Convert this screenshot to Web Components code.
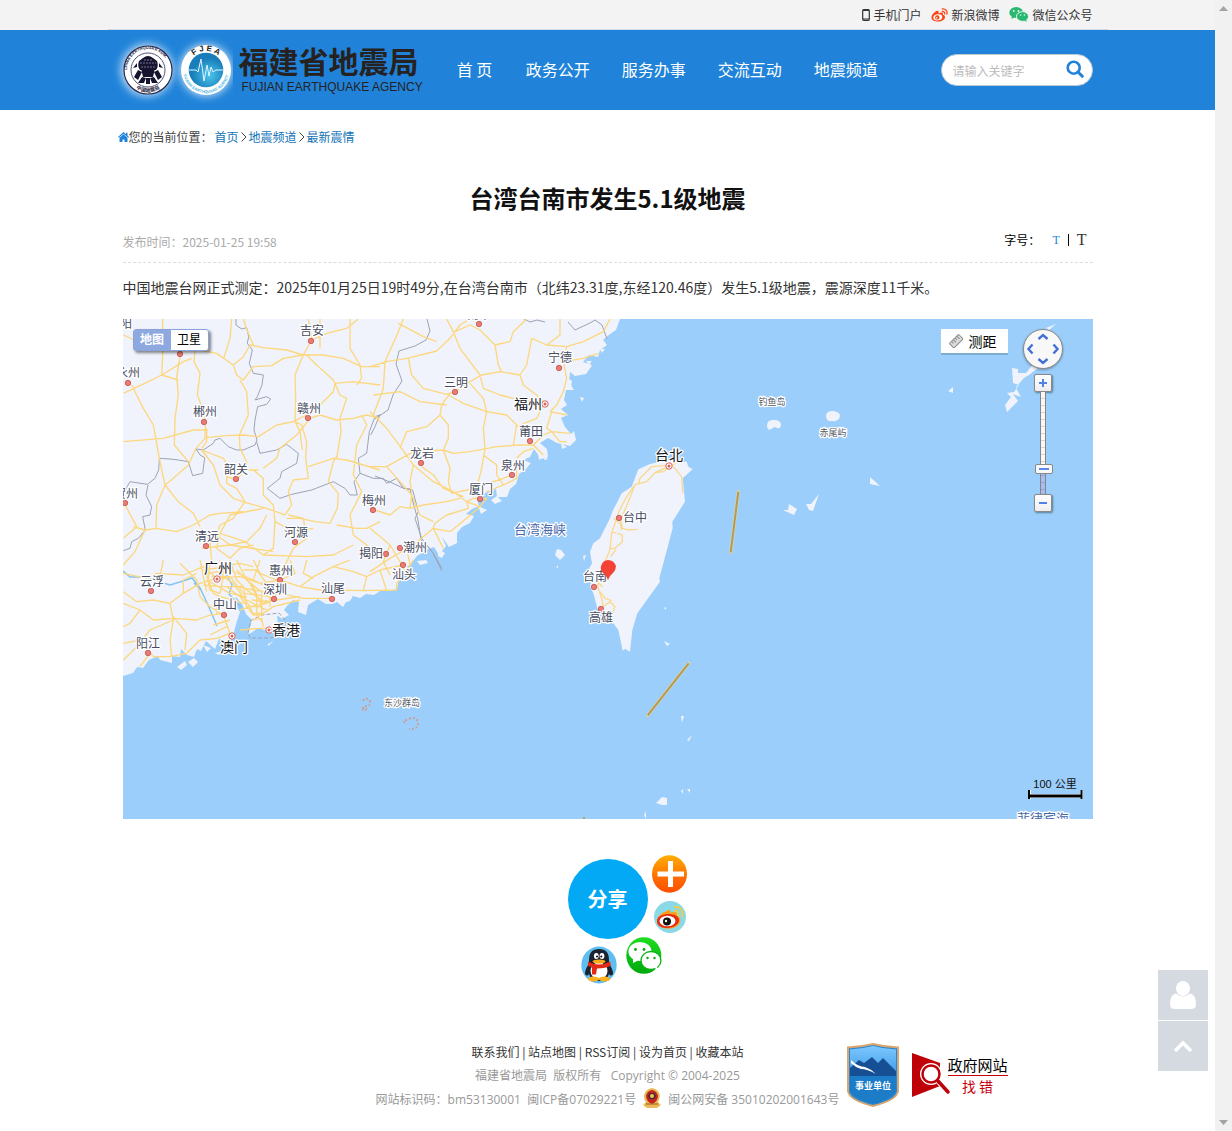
<!DOCTYPE html>
<html lang="zh-CN">
<head>
<meta charset="utf-8">
<meta name="viewport" content="width=device-width, initial-scale=1">
<title>台湾台南市发生5.1级地震</title>
<style>
html,body{margin:0;background:#fff}
body{min-height:100vh;display:grid;grid-template-columns:minmax(0,1fr) 17px;font:12px/24px "Noto Sans CJK SC",sans-serif;color:#333}
</style>
</head>
<body>
<quake-page></quake-page>
<page-scrollbar></page-scrollbar>
<script>
const define=(name,markup,setup)=>customElements.define(name,class extends HTMLElement{
  constructor(){super();const t=document.createElement('template');
    t.innerHTML='<style>*{box-sizing:border-box}a{color:inherit;text-decoration:none}button{font:inherit;border:0;padding:0;margin:0;background:none;cursor:pointer}svg{display:block}:host{display:block}</style>'+markup;
    this.attachShadow({mode:'open'}).appendChild(t.content.cloneNode(true));
    if(setup)setup(this.shadowRoot);}
});

define('page-scrollbar',`<style>
:host{background:#f1f1f1;display:flex;flex-direction:column;justify-content:space-between;align-items:center;padding:6px 0}
</style>
<svg width="9" height="5"><path d="M0 5 4.500 0 9 5z" fill="#a3a3a3"/></svg>
<svg width="9" height="5"><path d="M0 0h9L4.500 5z" fill="#a3a3a3"/></svg>`);

define('top-bar',`<style>
:host{background:#f3f3f3}
nav{max-width:1000px;height:30px;margin:0 auto;padding:0 15px;border-bottom:1px solid #c9dcee;display:flex;justify-content:flex-end;align-items:center;gap:10px}
a{display:flex;align-items:center;gap:3px}
</style>
<nav>
<a href="#"><svg width="8" height="12" viewBox="0 0 8 12"><rect x=".7" y=".7" width="6.600" height="10.600" rx="1" fill="none" stroke="#333" stroke-width="1.200"/><path d="M1 1.500h6M1 10h6" stroke="#333"/></svg>手机门户</a>
<a href="#"><svg width="17" height="14" viewBox="0 0 17 14"><path d="M7.500 4C8 3 7 2.200 5.500 3 3 4.200.5 7 .5 9.400.5 12 3.500 13.500 7 13.500c4 0 7-2 7-4.300 0-1.500-1-2-2.200-2.400.6-1.500 0-2.200-1.200-2.200-1 0-2 .4-2.900.8z" fill="#fa4412"/><ellipse cx="6.800" cy="9.300" rx="4.500" ry="3" transform="rotate(-8 6.800 9.300)" fill="#fff"/><circle cx="6.300" cy="9.400" r="2.200" fill="#fa4412"/><circle cx="5.700" cy="9.800" r=".8" fill="#fff"/><path d="M11.200 3.400c1.600-.3 2.800.9 2.400 2.500M11.300.9c3.200-.4 5.400 2.100 4.600 5.200" fill="none" stroke="#fa4412" stroke-width="1.300" stroke-linecap="round"/></svg>新浪微博</a>
<a href="#"><svg width="20" height="15" viewBox="0 0 20 15"><ellipse cx="7.200" cy="5.500" rx="6.900" ry="5.400" fill="#27b96f"/><path d="M3 9 2.300 12 6 10z" fill="#27b96f"/><ellipse cx="13.500" cy="9.500" rx="6" ry="4.900" fill="#27b96f" stroke="#f3f3f3"/><path d="M15 13l2.600 2-.6-3z" fill="#27b96f"/><g fill="#f3f3f3"><circle cx="4.800" cy="4" r=".9"/><circle cx="9.400" cy="4" r=".9"/><circle cx="11.600" cy="8" r=".8"/><circle cx="15.400" cy="8" r=".8"/></g></svg>微信公众号</a>
</nav>`);

define('agency-logo',`<style>
a{display:flex;align-items:center;color:#262222}
svg{margin:0 6px 0 -5px}
.n{display:flex;flex-direction:column}
b{font:700 30px/34px "Liberation Sans","Noto Sans CJK SC",sans-serif}
i{font:normal 12px/14px "Liberation Sans",sans-serif;padding-left:3px}
</style>
<a href="#" aria-label="福建省地震局">
<svg width="120" height="68" viewBox="0 0 120 68">
<defs><filter id="g" x="-40%" y="-40%" width="180%" height="180%"><feGaussianBlur stdDeviation="4"/></filter>
<radialGradient id="b" cx=".6" cy=".65"><stop offset="0" stop-color="#4cc4ea"/><stop offset="1" stop-color="#187dba"/></radialGradient>
<path id="r1" d="M14 34a21 21 0 0 1 42 0"/><path id="r2" d="M13 34a22 22 0 0 0 44 0"/><path id="r3" d="M74 34a19 19 0 0 1 38 0"/><path id="r4" d="M70 34a23 23 0 0 0 46 0"/></defs>
<circle cx="34" cy="34" r="26" fill="#fff" opacity=".75" filter="url(#g)"/><circle cx="93" cy="34" r="26" fill="#fff" opacity=".75" filter="url(#g)"/>
<circle cx="35" cy="34" r="24" fill="#fff" stroke="#2b2a50" stroke-width="1.200"/><circle cx="35" cy="34" r="17" fill="none" stroke="#2b2a50" stroke-width=".8"/>
<g fill="#1d1b3d" font-family="Liberation Sans" font-size="4" font-weight="bold"><text><textPath href="#r1" startOffset="0" >CHINA EARTHQUAKE ADM.</textPath></text><text font-family="Noto Sans CJK SC" font-size="5"><textPath href="#r2" startOffset="50%" text-anchor="middle">中国地震局</textPath></text></g>
<g fill="#15132f"><path d="M30 22q5-4 10 0l4 3q2 5-1 9H27q-3-4-1-9z"/><path d="M28 32h14l-2 9H30zM25 34l-4 7 4 3 4-8zM45 34l4 7-4 3-4-8zM29 41l-4 6h6l2-5zM41 41l4 6h-6l-2-5zM33 42h4v6h-4z"/><path d="M24 27l-4 5 4-1zM46 27l4 5-4-1z"/></g>
<path d="M27 27h16M28 31h14M31 24h8" stroke="#bcbbd0" stroke-width=".6" stroke-dasharray="2 1"/>
<circle cx="93" cy="34" r="25" fill="#fff"/><circle cx="93" cy="34" r="17.300" fill="url(#b)"/>
<path d="M76 34h7l2 2 3-13 3 22 3-16 2 11 2-9 2 5 3-2h7" fill="none" stroke="#dff5ff" stroke-width="1"/>
<g font-family="Liberation Sans" font-weight="bold"><text font-size="8" fill="#222"><textPath href="#r3" startOffset="50%" text-anchor="middle">F J E A</textPath></text><text font-size="4" fill="#46b3de"><textPath href="#r4" startOffset="50%" text-anchor="middle">FUJIAN EARTHQUAKE AGENCY</textPath></text></g>
</svg>
<span class="n"><b>福建省地震局</b><i>FUJIAN EARTHQUAKE AGENCY</i></span></a>`);

define('site-header',`<style>
:host{background:#2083d9}
.w{max-width:980px;height:80px;margin:0 auto;padding:0 5px 0 0;display:flex;align-items:center}
nav{display:flex;gap:32px;margin-left:34px;padding-bottom:2px;font-size:16px;line-height:24px;color:#fff;white-space:nowrap}
nav a{min-width:37px}
form{margin-left:auto;width:152px;height:32px;border-radius:16px;background:#fff;border:1px solid #bcc8d2;display:flex;align-items:center;padding:0 8px 0 11px}
form svg{margin-bottom:2px}
input{flex:1;min-width:0;border:0;outline:0;background:none;font:12px "Noto Sans CJK SC",sans-serif;padding:0}
input::placeholder{color:#bbb;opacity:1}
</style>
<div class="w"><agency-logo></agency-logo>
<nav><a href="#">首 页</a><a href="#">政务公开</a><a href="#">服务办事</a><a href="#">交流互动</a><a href="#">地震频道</a></nav>
<form><input type="text" aria-label="请输入关键字" placeholder="请输入关键字"><button type="button" aria-label="搜索"><svg width="18" height="18" viewBox="0 0 18 18" fill="none" stroke="#2083d9"><circle cx="7.700" cy="7.700" r="6" stroke-width="2.600"/><path d="M12 12l4.300 4.300" stroke-width="3" stroke-linecap="round"/></svg></button></form></div>`);

define('crumb-trail',`<style>
nav{max-width:980px;margin:0 auto;padding-top:15px;display:flex;align-items:center;color:#444}
a{color:#1173b8}svg.h{flex:none}span{margin-right:2px}svg.c{margin:0 2px}
</style>
<nav aria-label="当前位置"><svg class="h" width="11" height="10" viewBox="0 0 11 10" fill="#2083d9"><path d="M5.500 0 8 2.200V.8h1.500v2.800L11 5l-.7.8L5.500 1.700.7 5.800 0 5z"/><path d="M5.500 2.300 9.500 5.800v4.200H6.500V7.500H4.500V10h-3V5.800z"/></svg><span>您的当前位置：</span><a href="#">首页</a><svg class="c" width="6" height="10" fill="none" stroke="#444"><path d="M.5.5 5 5 .5 9.500"/></svg><a href="#">地震频道</a><svg class="c" width="6" height="10" fill="none" stroke="#444"><path d="M.5.5 5 5 .5 9.500"/></svg><a href="#">最新震情</a></nav>`);

const towns=[['邵阳',120,324],['衡阳',180,341,180,354],['永州',128,373,128,383],['吉安',312,331,311,341],['郴州',205,412,204,422],['赣州',309,409,308,418],['韶关',236,470,236,479],['贺州',126,494,125,503],['清远',207,537,206,546],['河源',296,533,295,542],['梅州',374,501,373,510],['揭阳',371,554,386,554],['潮州',415,548,400,548],['汕头',404,575,403,565],['惠州',281,571,280,580],['深圳',275,590,274,599],['汕尾',333,589,332,599],['云浮',152,582,151,591],['中山',225,605,224,615],['阳江',148,644,148,653],['南平',479,315,479,324],['宁德',560,358,559,368],['三明',456,383,455,392],['莆田',531,432,530,441],['龙岩',422,454,421,463],['泉州',513,466,512,475],['厦门',481,490,480,499],['台中',635,518,619,518],['台南',595,577,594,587],['高雄',601,618,601,609]];
const capitals=[['广州',218,568,217,579],['澳门',234,647,232,636],['香港',286,630,269,630],['福州',528,404,545,404],['台北',669,455,669,466]];

define('quake-map',`<style>
:host{position:relative;height:500px;overflow:hidden;background:#9bcefa}
.map{width:100%;height:100%}
.types{position:absolute;left:10px;top:10px;display:flex;border:1px solid #8ba4dc;border-radius:3px;background:#fff;box-shadow:2px 2px 3px #0007;line-height:18px}
.types button{width:37px;height:20px;padding-bottom:2px;color:#000}
.types button.on{background:#8ea8e0;color:#fff;font-weight:bold}
.ruler{position:absolute;right:85px;top:10px;width:67px;height:26px;background:#fff;border-bottom:2px solid #80aed2;display:flex;align-items:center;gap:6px;padding-left:8px;font-size:14px;color:#000}
.nav{position:absolute;right:30px;top:10px;width:40px;display:flex;flex-direction:column;align-items:center}
.pad{width:40px;height:40px;border-radius:50%;filter:drop-shadow(0 1px 1px #0005)}
.sq{width:18px;height:18px;border:1px solid #888;border-radius:2px;background:linear-gradient(#fff,#eee);box-shadow:1px 1px 2px #0006;display:grid;place-items:center}
.pad+.sq{margin-top:5px}
input{appearance:none;writing-mode:vertical-lr;direction:rtl;width:18px;height:102px;margin:0;background:none;display:block}
input::-webkit-slider-runnable-track{width:6px;height:102px;margin:0 auto;border:solid #858585;border-width:0 1px;background:repeating-linear-gradient(#0000 0 6px,#0002 6px 7px),linear-gradient(#f7f7f7 80%,#a8bcf5 80%)}
input::-webkit-slider-thumb{appearance:none;width:18px;height:10px;margin:0 -6px;border:1px solid #888;border-radius:2px;background:linear-gradient(#5c86e8,#5c86e8) center/10px 2px no-repeat,#fafafa}
.scale{position:absolute;right:10px;bottom:20px;width:55px;text-align:center;font:11px/12px "Liberation Sans","Noto Sans CJK SC",sans-serif;color:#111}
</style>
<svg class="map" role="img" aria-label="震中位置地图"><g id="world" transform="translate(-123 -319)">
<path fill="#f0f3fb" d="M123 319H620L616 330 610 334 603 340 607 345 600 350 598 357 589 355 583 362 592 365 586 374 575 376 570 372 569 382 574 390 566 390 564 400 567 405 561 409 568 415 561 418 565 427 571 434 574 431 576 440 570 446 557 443 548 438 540 443 547 449 548 457 541 459 534 449 530 457 523 460 531 463 525 470 519 474 516 484 510 489 507 497 497 497 496 489 485 493 477 498 479 506 472 509 466 514 474 516 470 523 462 527 457 533 457 543 449 547 442 537 446 546 439 555 434 547 428 549 417 556 413 561 407 567 407 573 399 579 397 589 388 591 380 591 374 595 366 594 360 598 353 596 350 601 346 602 343 607 337 602 332 604 326 604 318 599 313 602 308 605 306 615 298 612 299 602 293 600 287 606 284 610 289 615 282 619 277 615 278 626 267 631 258 628 251 633 248 634 252 620 246 614 242 604 236 597 234 602 240 612 237 621 234 632 229 642 219 639 215 649 206 641 201 651 197 649 194 657 187 655 181 649 180 657 172 656 172 663 160 660 158 656 149 660 143 668 137 667 133 673 123 676Z"/>
<g fill="#f0f3fb"><path d="M573 366l10-3 8 4-5 6-8-2zM567 378l5 3-1 6-5-2zM586 361l6 0-3 4zM600 349l5 0-3 4zM580 397l4 1-2 4zM491 500l6-4 5 5-7 3zM478 506l9 4-6 4zM561 443l6 4-5 2zM545 456l3 3-4 1zM538 452l7 4-6 4zM417 561l9-1 2 3-8 2zM438 549l7 4-3 5-4-2zM177 667l8-6 2 4-6 5zM188 662l6-4 4 4-5 5zM203 645l8 3-4 4zM244 605l6-2 5 6-6 3zM271 612l7 3-7 8-4-5zM268 644l6-3-6 5zM215 653l8-2-4 4zM256 611l5 0-2 4zM557 549l4 1 4 5-5 5-5-5zM583 556l3-1-2 6zM556 566l2 0 0 3zM767 426q0-7 7-6 7 0 7 5 0 5-7 2-6 6-7-1zM826 416q0-5 7-5 7 1 7 5-1 6-8 5-6 1-6-5zM870 477l10 9-10-2zM783 510l5 0 1-6 8 5-3 6zM806 504l5 0 8-10-6 17-4-1zM948 391l5-4 0 6zM1046 328l10-4-7 6zM1012 368l6 1 0 4 8 0 8-10 4 5-9 7-5 3-7 8-1 2 5 9-8-3 5 7-7 7-4 4-2-7 6-8-4-4 7-1 5-7-6-2zM656 803l6-6 5 1 0 7-5 0zM681 791l2-2 0 5zM687 789l3 0 0 4zM664 641l6 3-3 2zM681 716l3 0-2 7zM687 740l5-5-3 6zM664 608l2-1 0 3zM644 815l2-4 0 8z"/></g>
<g transform="translate(500 440) scale(.33333)"><path fill="#f0f3fb" d="M415 88 450 72 505 60 560 65 565 80 578 88 548 115 555 185 517 245 518 265 478 415 480 425 412 520 397 570 390 635 375 626 368 632 355 570 340 550 320 525 295 515 280 460 270 440 277 410 268 385 276 370 270 335 280 310 300 295 330 235 337 215 365 160 395 140Z"/>
<g fill="none" stroke="#fbd98c" stroke-width="4"><path d="M530 68 505 80 465 98 440 125 405 134 380 170 357 214 350 235 335 280 330 330 315 365 300 400 293 440 305 475 310 500 330 485 345 500 338 520M505 76 455 80 420 115 415 132M405 134 385 185 362 240 367 265 385 270 413 268M353 280 367 285 367 305 350 320 345 325 327 326M348 328 332 350M335 278 350 278M300 455 315 475 335 482M520 80 545 110 548 160M340 235 360 250 365 270M470 98 490 95 510 80M297 430 308 440"/></g>
<g fill="none" stroke="#d9d5a8" stroke-width="10" stroke-linecap="round"><path d="M715 155 692 337M566 670 443 826"/></g><g fill="none" stroke="#b59a55" stroke-width="6"><path d="M715 155 692 337M566 670 443 826M252 1138v-6"/></g></g>
<g fill="none" stroke-width="1" stroke="#9ca3b3">
<path id="borders" stroke-width="3" transform="translate(120 315) scale(.33333)" d="M348 12 348 30 365 42 380 38 386 65 382 85 397 105 388 145 400 175 430 180 426 210 412 245 405 255 440 245 452 252 440 268 413 275 405 315 402 345 411 375 405 390 370 405 350 405 325 395 300 370 285 375 280 385 250 405 228 402 240 420 254 428 248 475 218 482 205 440 175 435 150 432 118 430 116 465 105 490 82 508 30 500 10 535M84 510 78 540 95 575 90 600 68 605 76 645 55 670 35 680 30 700 10 707M410 380 420 415 470 405 500 388 535 415 530 445 485 470 480 490 442 520 480 550 515 538 575 525 640 500 675 520 690 540 712 540 702 500 720 475 715 430 740 415 748 350 765 305 780 300M720 475 760 490 790 490 800 505 830 490 850 520 878 525 895 590 885 610 905 670 940 715 965 760M780 298 765 335 752 360"/>
<path d="M427 319 430 331 426 340 415 346 399 351 396 364 402 381 393 395 388 410 375 419M524 319 530 322 537 320 545 322M568 322 575 330 590 323 595 320 602 325 607 339M375 476 390 482 403 488 410 489 414 506 418 520 421 540 428 547 433 553 442 571"/>
<path stroke-dasharray="4 2" d="M248 633 251 620 262 615 279 613 285 620 285 635 270 638 250 638 248 633"/></g>
<g fill="none" stroke="#d99182" stroke-width="1.500" stroke-dasharray="2 2"><path d="M363 701q3-5 7 0 1 6-5 5M362 708q5-1 4 2l-4 0M405 723q-3-3 2-3M409 719q7-3 9 3 1 8-9 7"/></g>
<g fill="none" stroke="#86c3f4" stroke-width="1.500"><path d="M123 571 130 577 146 577 154 580 170 585 180 582 192 578 200 588 208 605 217 626M217 580 224 570 232 585 229 594 241 607M201 590 194 583"/></g>
<g fill="none" stroke="#fcd77e" stroke-width="4" stroke-linejoin="round">
<g transform="translate(120 315) scale(.33333)"><path d="M10 60 75 90 130 105 215 100 290 115 340 150 370 125 390 90 430 98 500 105 550 120 610 120 670 130 725 155 780 155M370 12 385 55 400 90M340 150 350 180 370 195 400 155 455 152 490 130 550 120 575 75 620 55 680 40 715 12M335 12 330 70 312 128M128 12 128 120 125 180 175 195M10 235 85 200 125 180 190 140 215 130M35 210 70 280 100 330 118 430M225 105 222 140 240 175 232 240 255 300 256 340 255 370 228 400 205 450 160 490 135 510 175 560 220 595 240 635M180 125 170 185 175 240 165 310 163 390 205 440M10 380 130 370 220 345 256 345M256 368 320 362 370 360 415 365 470 330 520 320 560 300 600 270 640 230 645 205 700 200 780 210M360 195 380 230 385 300 358 360 360 400 380 440 375 460 350 495 320 485 320 505 350 520M550 120 525 180 527 250 525 320 540 350 547 405M525 320 545 330 560 380 557 430 565 490 520 495 505 530 515 570 495 600 440 580 375 562 340 550 300 510 280 450 245 405M560 120 590 150 640 195 660 240 680 250 660 310 663 350 650 430M415 465 380 465M400 465 430 490 430 540 460 570 465 620 460 700 430 720 375 680 300 655 330 600 430 580M430 460 470 430 480 400 530 360 570 310 600 300 650 315 700 310 740 300 780 310M565 455 640 430 680 435 780 465M625 500 640 440 650 425M625 500 655 535 652 580 630 625 585 620 540 610 500 610M505 600 550 610 560 670 520 700 495 750 470 780M118 430 135 510 110 570 108 640 170 650 220 630 270 600 300 595 370 590M10 560 50 635 10 670M40 635 75 645 110 640M75 645 45 710 10 750M350 520 375 560 340 610 300 630 290 660 330 690 380 680 420 640 440 600M260 340 260 380 245 400M245 405 310 430 330 460 350 480M690 12 690 100 720 150 725 190 710 210M725 300 740 330 710 390 700 480 725 530 710 560 690 600 700 660 740 690 780 720M780 620 740 640 710 640 650 630M300 655 290 700 330 730 360 700 400 690M430 720 560 725 640 720 700 690M465 620 520 650 580 640M600 12 600 100M565 12 575 70M245 640 270 680 275 740M245 700 330 690 460 710"/></g>
<g transform="translate(370 315) scale(.33333)"><path d="M100 12 85 50 45 140 40 220 10 300 50 340 95 400 130 450 190 500 250 530 290 560M0 155 50 140 110 130 200 108 240 70 270 30 300 12M85 25 160 65 200 80M115 130 125 180 160 220 230 238 255 230M230 12 250 50 270 100 330 180 340 220 390 240 430 250 500 260M255 230 300 200 335 180 390 170 450 180 470 150 485 70M255 50 300 30 330 45 375 90 420 80 430 50 470 12M375 90 385 150 395 170M450 180 460 210 500 240 520 260M485 70 530 90 590 95 580 140 590 190 580 230 560 270 540 290M590 95 640 80 700 50 720 12M580 140 640 130 685 115M530 90 570 60 570 12M240 235 215 270 210 300 235 330 235 370 220 405 250 415 300 410 380 395 450 390 490 390 520 360 545 350M235 240 280 265 350 290 410 300 440 330 430 390M300 205 340 250 350 290 340 340 345 400 335 460 325 500M220 405 130 410 50 455 0 455M50 455 90 500 125 540 120 580 160 570 230 560 270 550M220 405 240 460 235 500 245 535 290 525 340 510 400 490 425 480M10 240 90 230 150 260 230 270M340 420 380 450 380 480 400 510 350 530M400 510 440 490 440 465M520 270 500 310 450 330 440 335M540 290 590 300M545 290 530 340 545 350 570 380 590 380M545 350 600 355M290 560 330 575 350 550 310 550 290 560 295 580 230 600 195 625 190 640 240 650 290 610 330 575M125 540 150 600 190 620M0 290 10 300M90 400 110 350 170 335 210 300M130 450 120 500 125 530M155 455 190 480 220 520 280 545M0 580 60 600 90 575 120 580M0 640 60 690 90 740 110 780M0 770 60 730 130 690 190 640M190 640 220 700M490 390 520 420M440 430 460 410 490 400M60 690 40 740 60 780M110 700 120 750"/></g>
<g transform="translate(120 560) scale(.33333)"><path d="M10 95 50 125 100 120 150 130 190 100 240 70 290 55M10 130 60 150 100 180 160 175 230 180 270 165 310 160M10 300 50 260 90 210 160 180M10 250 60 240 100 290 150 290 200 280 240 240 290 235 330 220M90 280 60 320M150 130 160 180 150 240 155 290M160 170 200 220 195 270M60 150 30 190 10 200M180 10 230 60 240 110 270 140 310 165 330 220M120 50 130 0M10 40 80 55 110 40 190 45 250 20 290 55M190 100 190 60 230 40M480 60 470 100 460 120 440 130 390 140 360 150M480 60 420 70 360 50 290 55M480 60 540 80 600 90 640 90 730 92 830 90M480 100 550 115 635 115M540 80 580 50 640 20 690 0M730 92 740 50 780 30 850 15M830 90 830 70 850 50 880 0M780 30 800 92M640 20 700 35 740 50M510 0 525 40 480 60M560 0 550 40 580 55M420 0 400 60 440 80 480 100M470 120 540 110M360 210 420 205 445 205M395 180 425 175 430 200M400 160 430 160 460 140 540 120M260 95 250 50 240 0M270 0 265 60 280 100 300 110M300 0 310 50 300 100 270 90 260 40 330 30 400 60M310 50 340 70 390 140 400 165 430 165M330 0 350 60 380 90 440 130M350 0 380 60 430 100 460 120M250 75 300 80 350 80 400 90 470 100M330 90 380 120 440 150M300 110 340 120 370 130M320 80 360 110 400 165M340 80 370 80 380 140 420 140 440 120M390 70 410 110 410 160M370 100 450 110 450 140M370 30 410 30 440 70M300 20 360 10 400 20M250 30 320 20M275 50 330 50 370 100M260 60 330 100 380 110M350 30 400 80 430 150M290 165 290 130 340 145M280 195 330 180M270 225 320 200M410 165 430 190M425 100 425 165M395 120 450 125M400 0 420 40 470 60"/></g></g>
</g>
<g transform="translate(-123 -319)"><g id="dots"></g><g id="names" font-family="Noto Sans CJK SC" text-anchor="middle" paint-order="stroke" stroke="#fff" stroke-width="2.500" stroke-linejoin="round"></g>
<path d="M608 580q-1-4-5-7-3-3-2-7 2-6 7-6 6 0 8 6 0 4-3 7-4 3-5 7z" fill="#f44336"/></g></svg>
<div class="types"><button class="on" type="button">地图</button><button type="button">卫星</button></div>
<button class="ruler" type="button"><svg width="14" height="14" viewBox="0 0 14 14"><g transform="rotate(-45 7 7)"><rect x=".5" y="4" width="13" height="6.500" rx="1" fill="#ddd" stroke="#888"/><path d="M3.500 4v3M6 4v4M8.500 4v3M11 4v4" stroke="#888"/></g></svg>测距</button>
<div class="nav"><button class="pad" type="button" aria-label="平移"><svg width="40" height="40"><circle cx="20" cy="20" r="19.500" fill="#f8f8f8" stroke="#888"/><path d="M15.500 10l4.500-4 4.500 4M15.500 30l4.500 4 4.500-4M9.500 15.500l-4 4.500 4 4.500M30.500 15.500l4 4.500-4 4.500" fill="none" stroke="#426fd8" stroke-width="2.400"/></svg></button>
<button class="sq" type="button" aria-label="放大"><svg width="8" height="8"><path d="M0 4h8M4 0v8" stroke="#5080e8" stroke-width="2"/></svg></button>
<input type="range" min="0" max="18" value="4" aria-label="缩放级别">
<button class="sq" type="button" aria-label="缩小"><svg width="8" height="8"><path d="M0 4h8" stroke="#5080e8" stroke-width="2"/></svg></button></div>
<div class="scale">100 公里<svg width="55" height="9"><path d="M0 0h3v4h49V0h3v9h-3V8H3v1H0z" fill="#fff"/><path d="M1 0v9M53.500 0v9" stroke="#000" stroke-width="2"/><path d="M1 6h53" stroke="#000" stroke-width="3"/></svg></div>`,root=>{
  const ns='http://www.w3.org/2000/svg',names=root.getElementById('names'),dots=root.getElementById('dots');
  const put=(text,x,y,size,color,weight)=>{const e=document.createElementNS(ns,'text');e.textContent=text;
    for(const[k,v]of Object.entries({x,y:y+Math.round(size*.36),'font-size':size,fill:color,'font-weight':weight||400}))e.setAttribute(k,v);names.append(e)};
  const dot=(x,y,r,fill,stroke)=>{const e=document.createElementNS(ns,'circle');
    for(const[k,v]of Object.entries({cx:x,cy:y,r,fill,stroke}))e.setAttribute(k,v);dots.append(e)};
  for(const[n,x,y,dx,dy]of towns){if(dx)dot(dx,dy,2.700,'#ec7a72','#c9645f');if(n!=='衡阳')put(n,x,y,12,'#464c62')}
  for(const[n,x,y,dx,dy]of capitals){dot(dx,dy,3.200,'#fff','#d8645e');dot(dx,dy,1.500,'#d8645e','none');put(n,x,y,14,'#15171e',400)}
  put('台湾海峡',540,529,13,'#4467a8');put('菲律宾海',1043,818,13,'#4467a8');
  put('钓鱼岛',772,402,9,'#555b68');put('赤尾屿',833,433,9,'#555b68');put('东沙群岛',402,703,9,'#555b68');
});

define('quake-article',`<style>
article{max-width:970px;margin:31px auto 0}
h1{font-size:24px;line-height:36px;margin:0;text-align:center;color:#111}
.meta{margin-top:5px;height:42px;border-bottom:1px dashed #ddd;display:flex;justify-content:space-between;align-items:center;color:#aaa}
.size{display:flex;align-items:center;color:#000;padding:0 6px 4px 0}
.size button{font-family:"Liberation Serif",serif;color:#333}
.size .s{color:#2083d9;font-size:12px;margin:0 8px 0 12px}
.size .l{font-size:16px;margin-left:8px}
.size i{width:1px;height:12px;background:#000}
p{font-size:14px;line-height:28px;margin:10px 0 18px}
</style>
<article><h1>台湾台南市发生5.1级地震</h1>
<div class="meta"><span>发布时间：2025-01-25 19:58</span><div class="size">字号：<button class="s" type="button">T</button><i></i><button class="l" type="button">T</button></div></div>
<p>中国地震台网正式测定：2025年01月25日19时49分,在台湾台南市（北纬23.31度,东经120.46度）发生5.1级地震，震源深度11千米。</p>
<quake-map></quake-map></article>`);

define('share-cluster',`<style>
:host{position:relative;width:80px;height:80px;margin:40px auto 0}
.main{width:80px;height:80px;border-radius:50%;background:#03a9f4;color:#fff;font-weight:bold;font-size:20px}
a{position:absolute}
.plus{left:84px;top:-4px}.weibo{left:86px;top:42px}.wechat{left:58px;top:78px}.qq{left:13px;top:87px}
</style>
<button class="main" type="button">分享</button>
<a class="plus" href="#" aria-label="更多"><svg width="35" height="38" viewBox="0 0 35 38"><defs><linearGradient id="o" x2="0" y2="1"><stop stop-color="#ffae00"/><stop offset=".6" stop-color="#ff6c00"/><stop offset="1" stop-color="#ff4d00"/></linearGradient></defs><ellipse cx="17.500" cy="19" rx="17.500" ry="18.800" fill="url(#o)"/><path d="M18.500 6v26M5.500 19H32" stroke="#fff" stroke-width="5"/></svg></a>
<a class="weibo" href="#" aria-label="新浪微博"><svg width="32" height="32" viewBox="0 0 32 32"><circle cx="16" cy="16" r="16" fill="#8bd8e6"/><path d="M13 10c1-2 5-1 3 2 4-2 8-1 7 3 4 1 4 5 2 8-3 5-13 6-18 3-5-3-5-8-2-11 3-4 6-4 8-5z" fill="#ff9b12"/><path d="M3 20c0-4 5-7 11-7s11 2 11 6-5 8-12 8-10-3-10-7z" fill="#e62d12"/><ellipse cx="13.500" cy="20" rx="8" ry="5.300" fill="#fff"/><circle cx="13" cy="20.500" r="4" fill="#111"/><circle cx="12" cy="20" r="1.200" fill="#fff"/><path d="M20 10q5-1 4 5M20 6q10-1 8 10" stroke="#e7cf4d" stroke-width="2" fill="none"/></svg></a>
<a class="wechat" href="#" aria-label="微信"><svg width="36" height="37" viewBox="0 0 36 37"><defs><linearGradient id="w" x2="0" y2="1"><stop stop-color="#1ddd20"/><stop offset="1" stop-color="#00a80d"/></linearGradient></defs><ellipse cx="17.800" cy="18.500" rx="17.500" ry="18.300" fill="url(#w)"/><path d="M7 21 7 26 13 23z" fill="#fff"/><ellipse cx="14" cy="14.500" rx="11.500" ry="9.500" fill="#fff"/><ellipse cx="25" cy="23.500" rx="10" ry="9" fill="#fff" stroke="#06b414" stroke-width="1.300"/><path d="M28 30l3 3v-4z" fill="#fff"/><g fill="#09a616"><circle cx="9.500" cy="12.500" r="1.400"/><circle cx="18" cy="12.500" r="1.400"/><circle cx="21.500" cy="21" r="1.200"/><circle cx="28.500" cy="21" r="1.200"/></g></svg></a>
<a class="qq" href="#" aria-label="QQ"><svg width="36" height="38" viewBox="0 0 36 38"><ellipse cx="18" cy="19" rx="17.700" ry="18.500" fill="#5fbdef"/><path d="M8 14q0-11 10-11t10 11v4q4 5 4 10-2 3-4 0-2 7-10 7T8 28q-2 3-4 0 0-5 4-10z" fill="#1c2230"/><ellipse cx="18" cy="25" rx="8.500" ry="8.500" fill="#fff"/><ellipse cx="15.300" cy="10" rx="2.400" ry="3" fill="#fff"/><ellipse cx="21" cy="10" rx="2.400" ry="3" fill="#fff"/><circle cx="16" cy="10.500" r="1"/><circle cx="20.300" cy="10.500" r="1"/><ellipse cx="18" cy="15.500" rx="6.500" ry="2" fill="#fba919"/><path d="M7 15.500q11 6 22 0l1 4q-5 3-14 3l-1 6h-4v-7q-3-1-4-2z" fill="#e42a15"/><ellipse cx="12.500" cy="33" rx="5.500" ry="2.600" fill="#fbb01c"/><ellipse cx="23.500" cy="33" rx="5.500" ry="2.600" fill="#fbb01c"/></svg></a>`);

define('site-footer',`<style>
footer{margin-top:101px;padding-bottom:19px;display:grid;grid-template-columns:1fr minmax(470px,auto) 1fr;column-gap:4px;align-items:center;font-family:"Open Sans","Noto Sans CJK SC",sans-serif}
.t{grid-column:2;color:#999;white-space:nowrap;display:flex;flex-direction:column;align-items:center}
.t>div{height:24px;display:flex;align-items:center;white-space:pre}
nav{color:#333;height:24px;white-space:pre;font-family:"Noto Sans CJK SC",sans-serif}
.b{display:flex;align-items:center;gap:12px;height:64px;margin-top:-2px}
.police{margin:-4px 6px 0 6px}
.find{display:flex;align-items:center;font-family:"Noto Sans CJK SC",sans-serif}
.find span{display:flex;flex-direction:column;align-items:center;font-size:15px;line-height:20px;color:#000;margin-left:-3px}
.find em{font-size:14px;font-style:normal;color:#c7000b;border-top:1px solid #c7000b;width:100%;text-align:center;white-space:pre}
</style>
<footer><div class="t"><nav><a href="#">联系我们</a> | <a href="#">站点地图</a> | <a href="#">RSS订阅</a> | <a href="#">设为首页</a> | <a href="#">收藏本站</a></nav>
<div>福建省地震局  版权所有   Copyright © 2004-2025</div>
<div>网站标识码：bm53130001  <a href="#">闽ICP备07029221号</a><svg class="police" width="20" height="20" viewBox="0 0 20 20"><path d="M10 0q7 1 8 8-1 4-2 6l3 3-4 3H5l-4-3 3-3Q2 12 2 8q1-7 8-8z" fill="#e9ba55"/><path d="M10 2q5 1 6 6 0 5-6 8-6-3-6-8 1-5 6-6z" fill="#c3231b"/><path d="M6 8h8M7 10h6M7 6h6" stroke="#282b55" stroke-width="1.500"/><circle cx="10" cy="8" r="2" fill="#f0c53f"/><path d="M4 16h12" stroke="#9d5a21"/></svg><a href="#">闽公网安备 35010202001643号</a></div></div>
<div class="b"><a href="#" aria-label="事业单位"><svg width="52" height="64" viewBox="0 0 52 64"><defs><linearGradient id="s" x2="0" y2="1"><stop stop-color="#7dc8ff"/><stop offset="1" stop-color="#3997e4"/></linearGradient></defs><path d="M26 1Q38 4 51 4.500V48Q50 57 26 63 2 57 1 48V4.500Q14 4 26 1z" fill="#2b86d1" stroke="#d9a66d" stroke-width="2"/><path d="M26 3Q38 6 49 6.500V34H3V6.500Q14 6 26 3z" fill="url(#s)"/><path d="M3 25 12 17 17 20 25 14 31 20 36 15 49 28V35H3z" fill="#174f94"/><path d="M4 17q7 7 14 7 6 2 11 7-9-5-15-5-6-2-10-6z" fill="#fff"/><path d="M3 33h46v16Q42 57 26 61 8 56 3 49z" fill="#1d7cc8"/><text x="26" y="46" text-anchor="middle" font-family="Noto Sans CJK SC" font-size="9" font-weight="700" fill="#fff">事业单位</text></svg></a>
<a class="find" href="#"><svg width="40" height="46" viewBox="0 0 40 46"><path d="M1 1 29 11V34L1 45z" fill="#bf0008"/><circle cx="20" cy="22" r="11" fill="#fff"/><circle cx="20" cy="22" r="8.500" fill="none" stroke="#bf0008" stroke-width="2.500"/><path d="M28 30 38 40" stroke="#fff" stroke-width="6"/><path d="M27 29 37 40" stroke="#bf0008" stroke-width="3.500" stroke-linecap="round"/></svg><span>政府网站<em>找 错</em></span></a></div></footer>`);

define('side-tools',`<style>
:host{position:fixed;right:24px;bottom:60px;display:flex;flex-direction:column;gap:1px}
a{width:50px;height:50px;background:#d4dae0;display:grid;place-items:center}
</style>
<a href="#" aria-label="用户"><svg width="26" height="28" viewBox="0 0 26 28" fill="#fff"><ellipse cx="13" cy="7.500" rx="7" ry="7.500"/><path d="M6 12.500q7 6 14 0 6 1 6 11 0 4.500-5 4.500H5q-5 0-5-4.500 0-10 6-11z"/></svg></a>
<a href="#" aria-label="返回顶部"><svg width="20" height="14" viewBox="0 0 20 14"><path d="M2 12l8-8 8 8" fill="none" stroke="#fff" stroke-width="3.400"/></svg></a>`);

define('quake-page',`<top-bar></top-bar><site-header></site-header><crumb-trail></crumb-trail><quake-article></quake-article><share-cluster></share-cluster><site-footer></site-footer><side-tools></side-tools>`);
</script>
</body>
</html>
